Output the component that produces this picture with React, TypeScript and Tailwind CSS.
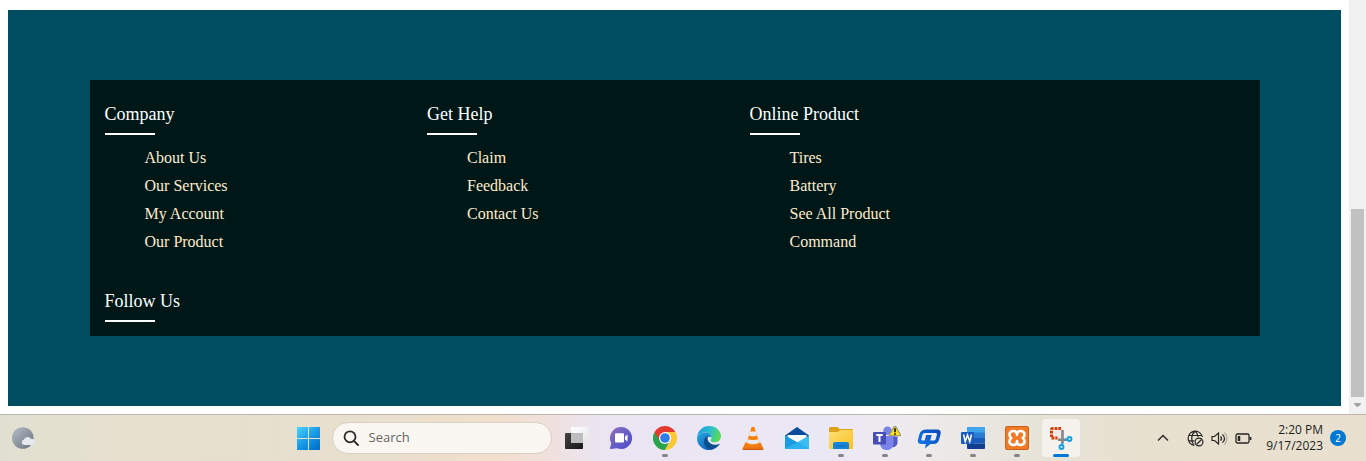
import type { ReactNode } from "react";

type Group = { title: string; links: string[] };

const groups: Group[] = [
  { title: "Company", links: ["About Us", "Our Services", "My Account", "Our Product"] },
  { title: "Get Help", links: ["Claim", "Feedback", "Contact Us"] },
  { title: "Online Product", links: ["Tires", "Battery", "See All Product", "Command"] },
  { title: "Follow Us", links: [] },
];

function FooterColumn({ title, links }: Group) {
  return (
    <section className="box-content w-1/4 px-[15px]">
      <h4 className="text-lg leading-5 text-white">{title}</h4>
      <div className="mt-[9px] h-0.5 w-[50px] bg-white" />
      {links.length > 0 && (
        <ul className="mt-[9px] mb-[35px] pl-10">
          {links.map((link) => (
            <li key={link} className="h-7 leading-7">
              <a href="#" className="text-base text-[#ffebcd]">
                {link}
              </a>
            </li>
          ))}
        </ul>
      )}
    </section>
  );
}

function Scrollbar() {
  return (
    <div aria-hidden="true" className="flex w-[17px] shrink-0 flex-col items-center justify-end bg-[#f1f1f1]">
      <div className="h-[188px] w-[13px] bg-[#c1c1c1]" />
      <svg className="h-[17px] w-[17px]" viewBox="0 0 17 17">
        <path d="M5 6h7v1l-3 3h-1L5 7z" fill="#a3a3a3" />
      </svg>
    </div>
  );
}

function Icon({ children }: { children: ReactNode }) {
  return (
    <svg className="h-6 w-6" viewBox="0 0 24 24" aria-hidden="true">
      {children}
    </svg>
  );
}

const StartIcon = (
  <Icon>
    <defs>
      <linearGradient id="start" gradientUnits="userSpaceOnUse" x1="1" y1="1" x2="20" y2="23">
        <stop offset="0" stopColor="#4bd4ff" />
        <stop offset="0.5" stopColor="#1c9fe8" />
        <stop offset="1" stopColor="#0072d0" />
      </linearGradient>
    </defs>
    <path d="M1 1h11v11H1zM13 1h11v11H13zM1 13h11v11H1zM13 13h11v11H13z" fill="url(#start)" />
  </Icon>
);

const TaskViewIcon = (
  <Icon>
    <defs>
      <linearGradient id="tv-dark" x1="0" y1="0" x2="1" y2="1">
        <stop offset="0" stopColor="#454545" />
        <stop offset="1" stopColor="#161616" />
      </linearGradient>
      <linearGradient id="tv-light" x1="0" y1="0" x2="1" y2="1">
        <stop offset="0" stopColor="#ffffff" />
        <stop offset="1" stopColor="#e3e3e6" />
      </linearGradient>
    </defs>
    <rect x="6" y="1" width="18" height="16" rx="0.8" fill="url(#tv-light)" />
    <rect x="0" y="7" width="18" height="16" rx="0.8" fill="url(#tv-dark)" />
    <rect x="6" y="7" width="12" height="10" fill="#bdbdbd" />
  </Icon>
);

const ChatIcon = (
  <Icon>
    <defs>
      <linearGradient id="chat" x1="0" y1="0" x2="1" y2="1">
        <stop offset="0" stopColor="#9a72b8" />
        <stop offset="0.4" stopColor="#6c62c2" />
        <stop offset="1" stopColor="#4c4bcf" />
      </linearGradient>
    </defs>
    <path d="M12.500 1A11 11 0 1 1 8 22.200L1.800 23c-.6.1-1-.5-.8-1l1.300-4.800A11 11 0 0 1 12.500 1z" fill="url(#chat)" />
    <rect x="6" y="7.200" width="9" height="9.400" rx="1" fill="#fff" />
    <path d="M16 10.400l2.500-2v7l-2.500-2z" fill="#fff" />
  </Icon>
);

const ChromeIcon = (
  <Icon>
    <path d="M12 12L1.600 6A12 12 0 0 0 12 24l5-9z" fill="#2ba24c" />
    <path d="M12 6h10.400A12 12 0 0 1 12 24l5.200-9z" fill="#fcc934" />
    <path d="M12 6h10.400A12 12 0 0 0 1.600 6l5.200 9z" fill="#e33b2e" />
    <circle cx="12" cy="12" r="6" fill="#fff" />
    <circle cx="12" cy="12" r="4.800" fill="#2f7de9" />
  </Icon>
);

const EdgeIcon = (
  <Icon>
    <defs>
      <linearGradient id="edge-top" x1="0" y1="0.2" x2="1" y2="0.5">
        <stop offset="0" stopColor="#1c9bdc" />
        <stop offset="0.5" stopColor="#28bfd3" />
        <stop offset="1" stopColor="#5bdc4f" />
      </linearGradient>
      <linearGradient id="edge-left" x1="0" y1="0" x2="0.7" y2="1">
        <stop offset="0" stopColor="#2ba7e2" />
        <stop offset="1" stopColor="#0d62b8" />
      </linearGradient>
    </defs>
    <path d="M.1 11C.8 4.700 5.800 0 12 0c7 0 12 5 12 10.300 0 3.700-2.900 6-6.200 6-2.700 0-4.300-.9-4.300-1.900 0-.7 1-1 1-2.900 0-2.700-2.600-5-6.500-5C4.500 6.500 1.500 8.200.1 11z" fill="url(#edge-top)" />
    <path d="M.1 11C1.500 8.200 4.500 6.500 8 6.500c3.900 0 6.500 2.300 6.500 5-3-2-7 1-5.700 5.300C9.800 20.300 13 23 16 23.300 8.500 26-.7 20.500.1 11z" fill="url(#edge-left)" />
    <path d="M10.600 9.800c-3.600 1.600-5 6.500-2.300 10.200 2.300 3.300 5.700 3.900 7.700 3.300 2.700-.8 5-2.600 6.400-4.700.4-.6-.1-1-.6-.7-5.300 2.600-11.600-.8-11.200-6.100z" fill="#0c4f91" />
  </Icon>
);

const ConeIcon = (
  <Icon>
    <path d="M4.500 16.500h15l3 6.200c.2.700-.2 1.200-.9 1.200H2.400c-.7 0-1.100-.5-.9-1.200z" fill="#ef7614" />
    <path d="M10.500 1.500c.4-1 2.600-1 3 0L19 18.500c-2.500 2.800-11.500 2.800-14 0z" fill="#f5820f" />
    <path d="M9.300 5.500h5.400l1.300 4c-2 1-6 1-8 0zM6.900 13c2.500 1.300 7.700 1.300 10.200 0l1.200 3.800c-3 1.800-9.600 1.800-12.600 0z" fill="#eceaf1" />
    <path d="M2 23.300h20" stroke="#c85409" />
  </Icon>
);

const MailIcon = (
  <Icon>
    <path d="M0 9.500L12 1l12 8.500V14H0z" fill="#0b4c9a" />
    <path d="M2.500 9h19v8h-19z" fill="#f5f8fc" />
    <path d="M0 9.500l12 7 12-7V22a1 1 0 0 1-1 1H1a1 1 0 0 1-1-1z" fill="#38bdf2" />
    <path d="M0 9.500l24 13.200-1 .3H1a1 1 0 0 1-1-1z" fill="#1b9be0" />
    <path d="M0 22.500l12.500-6.200L24 22.500l-1 .5H1z" fill="#2cb1ec" />
    <path d="M2.800 9h18.400L12 15.500z" fill="#f7f9fd" />
  </Icon>
);

const FolderIcon = (
  <Icon>
    <defs>
      <linearGradient id="folder" x1="0" y1="0" x2="1" y2="1">
        <stop offset="0" stopColor="#ffe173" />
        <stop offset="1" stopColor="#f8bf24" />
      </linearGradient>
    </defs>
    <path d="M0 7V2.500A1.500 1.500 0 0 1 1.500 1h7l2 2H23a1 1 0 0 1 1 1v4z" fill="#dda11b" />
    <path d="M0 6h9l2-2h12a1 1 0 0 1 1 1v17a1 1 0 0 1-1 1H1a1 1 0 0 1-1-1z" fill="url(#folder)" />
    <path d="M4 23v-5a2 2 0 0 1 2-2h12a2 2 0 0 1 2 2v5z" fill="#1585d8" />
    <path d="M7 19.500h10v1H7z" fill="#0c64b5" />
  </Icon>
);

const TeamsIcon = (
  <svg className="h-6 w-8" viewBox="0 0 32 24" aria-hidden="true">
    <circle cx="18.500" cy="4.800" r="4.300" fill="#7b83eb" />
    <circle cx="25" cy="8" r="2.500" fill="#5059c9" />
    <path d="M20 10.500h8.500v6a4.800 4.800 0 0 1-6 4.500z" fill="#5059c9" />
    <path d="M11 10h13.500v7.500a6.700 6.700 0 0 1-13.500 0z" fill="#7b83eb" />
    <rect x="4" y="6" width="13" height="12.500" rx="1" fill="#464eb8" />
    <path d="M7.300 9h6.400M10.500 9v7" stroke="#fff" strokeWidth="2" />
    <path d="M26 -.8L32 9.800H20z" fill="#fde21b" stroke="#969274" strokeWidth="1.100" strokeLinejoin="round" />
    <path d="M26 2.300v3.900M26 7.300v1.400" stroke="#181818" strokeWidth="1.700" />
  </svg>
);

const BubbleIcon = (
  <Icon>
    <defs>
      <linearGradient id="bubble" x1="1" y1="0" x2="0" y2="1">
        <stop offset="0" stopColor="#0a46b8" />
        <stop offset="1" stopColor="#167ff0" />
      </linearGradient>
    </defs>
    <path
      d="M9.500 3.500H20c3.300 0 4.200 1.900 3.500 4.700l-1.400 5.300c-.8 3.200-2.500 4.500-5.700 4.500h-3L8 22.500 8.800 18H4.500C1.200 18 .3 16.200 1 13.500l1.400-5.200C3.200 5 5.700 3.500 9.500 3.500z"
      fill="url(#bubble)"
    />
    <path d="M8.800 7h9.400c1.600 0 2 .5 1.600 2l-1 3.700c-.4 1.300-1.100 1.800-2.600 1.800h-3l1.500-5.500H9.200l-1.500 5.500h-2c-1.400 0-1.600-.6-1.300-1.800l1-3.700c.4-1.500 1.300-2 3.400-2z" fill="#eeeaf0" />
  </Icon>
);

const WordIcon = (
  <Icon>
    <path d="M6 1h18v6H6z" fill="#41a5ee" />
    <path d="M6 6.500h18V12H6z" fill="#2b7cd3" />
    <path d="M6 12h18v5.500H6z" fill="#185abd" />
    <path d="M6 17.500h18V22a1 1 0 0 1-1 1H7a1 1 0 0 1-1-1z" fill="#103f91" />
    <rect x="0" y="6" width="13" height="12" rx="1" fill="#185abd" />
    <path d="M2.500 8.500l1.700 7L6.500 9l2.300 6.500 1.700-7" fill="none" stroke="#fff" strokeWidth="1.500" />
  </Icon>
);

const XamppIcon = (
  <Icon>
    <rect x="0.500" y="0.500" width="23" height="23" rx="1.500" fill="#f07a25" stroke="#c9611a" />
    <path
      d="M12 8.800c.1-2.400-1.400-3.800-3.600-3.800S4.500 6.500 4.500 8.500c0 1.500.6 2.700 1.700 3.500-1.100.8-1.700 2-1.700 3.500 0 2 1.700 3.500 3.900 3.500s3.700-1.400 3.600-3.800c-.1 2.400 1.400 3.800 3.600 3.800s3.900-1.500 3.900-3.500c0-1.500-.6-2.700-1.700-3.500 1.100-.8 1.700-2 1.700-3.500 0-2-1.700-3.500-3.900-3.500S11.900 6.400 12 8.800z"
      fill="#f07a25"
      stroke="#fff"
      strokeWidth="2.700"
      strokeLinejoin="round"
    />
  </Icon>
);

const SnipIcon = (
  <Icon>
    <rect x="1" y="2" width="13" height="12" fill="#f3e9e6" />
    <path d="M12 2.500H3.500a1 1 0 0 0-1 1V12h6" fill="none" stroke="#d83b01" strokeWidth="3" strokeDasharray="2.700 1" />
    <path d="M13.500 4v9.700h4M9 13.700h4.500v3.500" fill="none" stroke="#85858a" strokeWidth="2.600" />
    <circle cx="20.500" cy="13" r="2" fill="#d3f0fd" stroke="#15a0df" strokeWidth="1.900" />
    <circle cx="12.500" cy="21" r="2" fill="#d3f0fd" stroke="#15a0df" strokeWidth="1.900" />
    <path d="M13.500 16.500l-.5 2.500M16.500 13.700l2-.3" stroke="#15a0df" strokeWidth="2" />
  </Icon>
);

type TaskbarApp = { name: string; icon: ReactNode; state?: "open" | "active" };

const apps: TaskbarApp[] = [
  { name: "Task view", icon: TaskViewIcon },
  { name: "Chat", icon: ChatIcon },
  { name: "Chrome", icon: ChromeIcon, state: "open" },
  { name: "Edge", icon: EdgeIcon },
  { name: "VLC", icon: ConeIcon },
  { name: "Mail", icon: MailIcon },
  { name: "File Explorer", icon: FolderIcon, state: "open" },
  { name: "Teams", icon: TeamsIcon, state: "open" },
  { name: "Messenger", icon: BubbleIcon, state: "open" },
  { name: "Word", icon: WordIcon, state: "open" },
  { name: "XAMPP", icon: XamppIcon, state: "open" },
  { name: "Snipping Tool", icon: SnipIcon, state: "active" },
];

function AppButton({ name, icon, state }: TaskbarApp) {
  return (
    <button
      type="button"
      aria-label={name}
      className={
        state === "active"
          ? "relative flex h-[38px] w-[38px] items-center justify-center rounded bg-[#f5f2ee] ring-1 ring-[#e6e2dc]"
          : "relative flex h-[38px] w-[38px] items-center justify-center rounded"
      }
    >
      {icon}
      {state === "open" && <span className="absolute bottom-0 h-[3px] w-1.5 rounded-full bg-[#85838a]" />}
      {state === "active" && <span className="absolute bottom-0 h-[3px] w-4 rounded-full bg-[#0078d4]" />}
    </button>
  );
}

function Taskbar() {
  return (
    <footer className="grid h-[47px] grid-cols-[1fr_auto_1fr] items-center border-t border-[#b9b5ad] pr-2.5 pl-3 font-['Open_Sans','Noto_Sans',sans-serif] text-[#1e1e1e] [background-image:linear-gradient(90deg,#e1e0d0_0%,#e7e0cf_10%,#e8dfcd_28%,#f1dfcb_36%,#f0e0dc_40%,#ebe5f2_44%,#ebe8f6_60%,#eeebef_66%,#e6e3d7_76%,#e8e0ce_85%,#e9e0cf_100%)]">
      <button type="button" aria-label="Weather" className="flex h-6 w-6 items-center justify-center">
        <svg className="h-6 w-6" viewBox="0 0 24 24" aria-hidden="true">
          <defs>
            <linearGradient id="moon" x1="0" y1="0" x2="1" y2="1">
              <stop offset="0" stopColor="#b5bdc9" />
              <stop offset="1" stopColor="#69727d" />
            </linearGradient>
          </defs>
          <circle cx="10.800" cy="12" r="10.800" fill="url(#moon)" />
          <path d="M12 19a2.800 2.800 0 0 1 0-5.500c.8-3 5.300-3.500 6.700-.6 2.500-.3 4.200 1.200 4.200 3.100s-1.400 3-3.300 3z" fill="#e5e9ef" />
        </svg>
      </button>

      <div className="flex items-center gap-1.5">
        <div className="flex items-center gap-[5px]">
          <button type="button" aria-label="Start" className="flex h-[38px] w-[38px] items-center justify-center">
            {StartIcon}
          </button>
          <label className="flex h-8 w-[220px] items-center gap-2.5 rounded-full border border-[#d9d0c4] bg-[#faf7f3] px-2.5">
            <svg className="h-4 w-4" viewBox="0 0 16 16" fill="none" stroke="#2a2a2a" strokeWidth="1.800" aria-hidden="true">
              <circle cx="7" cy="6.800" r="5.500" />
              <path d="M11 11l4 4" strokeLinecap="round" />
            </svg>
            <input
              type="text"
              aria-label="Search"
              placeholder="Search"
              className="min-w-0 flex-1 bg-transparent text-[13px] outline-none placeholder:text-[#666461]"
            />
          </label>
        </div>
        {apps.map((app) => (
          <AppButton key={app.name} {...app} />
        ))}
      </div>

      <div className="flex items-center justify-end pr-2.5">
        <button type="button" aria-label="Show hidden icons" className="mr-[18px]">
          <svg className="h-3 w-3" viewBox="0 0 12 12" fill="none" stroke="#2a2a2a" strokeWidth="1.400" aria-hidden="true">
            <path d="M1 8.500l5-5 5 5" />
          </svg>
        </button>
        <button type="button" aria-label="Network, volume and battery" className="mr-3.5 flex items-center gap-[7px]">
          <svg className="h-[17px] w-[17px]" viewBox="0 0 17 17" fill="none" stroke="#262626" strokeWidth="1.200" aria-hidden="true">
            <path d="M7.500 15.500A7.200 7.200 0 1 1 15.400 7M1.300 5.500h13.200M1.300 10.800h6M7 15.500C3.800 11.500 3.800 5 8 1c2 1.700 3 4 3.100 6" />
            <circle cx="12" cy="12" r="3.900" />
            <path d="M9.500 14.500l5-5" />
          </svg>
          <svg className="h-[17px] w-[17px]" viewBox="0 0 17 17" fill="none" stroke="#262626" strokeWidth="1.200" aria-hidden="true">
            <path d="M1 6.500h2.500l4-3.500v11l-4-3.500H1zM9.500 6.300c1.200 1.300 1.200 3.100 0 4.400M11.500 4.300c2.400 2.500 2.400 5.900 0 8.400" />
            <path d="M13.500 2.500c3.300 3.400 3.300 8.600 0 12" stroke="#b3aca0" />
          </svg>
          <svg className="h-[17px] w-[17px]" viewBox="0 0 17 17" fill="none" stroke="#262626" strokeWidth="1.300" aria-hidden="true">
            <rect x="1" y="4" width="13" height="9" rx="1.500" />
            <path d="M15.500 7v3" strokeWidth="1.800" />
            <path d="M4 6v5" strokeWidth="2.500" />
          </svg>
        </button>
        <button type="button" className="mr-[7px] text-right text-xs leading-4">
          2:20 PM
          <br />
          9/17/2023
        </button>
        <span className="flex h-4 w-4 items-center justify-center rounded-full bg-[#0078d4] text-[10px] leading-4 text-white">2</span>
      </div>
    </footer>
  );
}

export default function App() {
  return (
    <div className="flex min-h-screen flex-col bg-white">
      <div className="flex flex-1">
        <main className="flex-1 px-2 pt-2.5 pb-2 font-['Liberation_Serif',serif]">
          <div className="h-full bg-[#004d61] py-[70px]">
            <div className="mx-auto flex max-w-[1170px] flex-wrap bg-[#001717] pt-6 pb-3.5">
              {groups.map((group) => (
                <FooterColumn key={group.title} {...group} />
              ))}
            </div>
          </div>
        </main>
        <Scrollbar />
      </div>
      <Taskbar />
    </div>
  );
}
